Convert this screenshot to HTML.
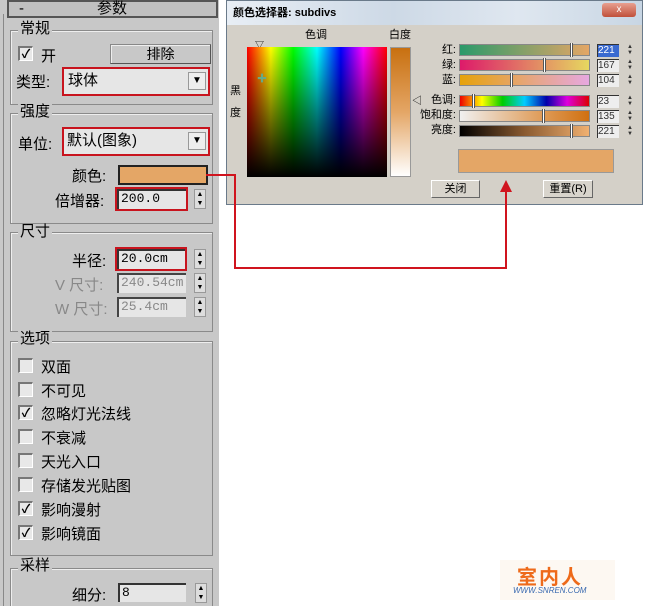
<!DOCTYPE html>
<html><head><meta charset="utf-8"><style>
*{box-sizing:border-box;margin:0;padding:0}
html,body{width:650px;height:606px;overflow:hidden}
body{background:#fff;position:relative;font-family:"Liberation Sans","Noto Sans CJK SC",sans-serif;font-size:14px;color:#000}
.a{position:absolute}
.grp{position:absolute;border:1px solid #8a8a8a;box-shadow:1px 1px 0 #eee inset}
.lbl{position:absolute;background:#c8c8c8;padding:0 2px;font-size:15px;line-height:16px}
.cb{position:absolute;width:15px;height:15px;background:#e8e8e8;border-top:2px solid #777;border-left:2px solid #777;border-right:1px solid #fff;border-bottom:1px solid #fff;font-size:12px;line-height:12px;text-align:center;font-weight:bold}
.in{position:absolute;background:#e6e6e6;border-top:2px solid #333;border-left:2px solid #333;font-family:"Liberation Mono",monospace;font-size:13px;padding-left:2px;line-height:16px}
.red{outline:2px solid #c8141e}
.sp{position:absolute;width:12px;height:20px;background:#ddd;border:1px solid #999;font-size:7px;line-height:9px;text-align:center}
.dd{position:absolute;width:18px;height:18px;background:#eee;border:1px solid #999;font-size:10px;text-align:center;line-height:16px}
.sl{position:absolute;left:459px;width:131px;height:12px;border:1px solid #888}
.nb{position:absolute;left:597px;width:22px;height:13px;background:#eee;border-top:1px solid #333;border-left:1px solid #333;font-size:10px;line-height:12px;color:#333}
.ss{position:absolute;left:627px;width:6px;height:13px;font-size:6px;line-height:6px;color:#333}
.tk{position:absolute;width:3px;height:14px;background:#fff;border-left:1px solid #555;border-right:1px solid #555;top:-2px}
</style></head><body>
<div class="a" style="left:0;top:0;width:219px;height:606px;background:#c8c8c8"></div>
<div class="a" style="left:3px;top:14px;width:1px;height:592px;background:#888"></div>
<div class="a" style="left:7px;top:0;width:211px;height:18px;background:#c0c0c0;border:2px solid #555;font-size:15px;line-height:13px"><span style="position:absolute;left:10px">-</span><span style="position:absolute;left:88px">参数</span></div>

<div class="grp" style="left:10px;top:30px;width:203px;height:75px"></div>
<div class="lbl" style="left:18px;top:21px">常规</div>
<div class="cb" style="left:18px;top:46px">✓</div><div class="a" style="left:41px;top:45px;font-size:15px">开</div>
<div class="a" style="left:110px;top:44px;width:101px;height:20px;background:#c8c8c8;border:1px solid #888;border-right-color:#555;border-bottom-color:#555;box-shadow:1px 1px 0 #eee inset;text-align:center;font-size:14px;line-height:18px">排除</div>
<div class="a" style="left:16px;top:71px;font-size:15px">类型:</div>
<div class="a red" style="left:64px;top:69px;width:144px;height:25px;background:#e6e6e6;font-size:15px;line-height:24px;padding-left:4px">球体</div>
<div class="dd" style="left:188px;top:72px">▼</div>

<div class="grp" style="left:10px;top:113px;width:203px;height:111px"></div>
<div class="lbl" style="left:18px;top:104px">强度</div>
<div class="a" style="left:18px;top:133px;font-size:15px">单位:</div>
<div class="a red" style="left:64px;top:129px;width:144px;height:25px;background:#e6e6e6;font-size:15px;line-height:24px;padding-left:3px">默认(图象)</div>
<div class="dd" style="left:188px;top:132px">▼</div>
<div class="a" style="left:72px;top:165px;font-size:15px">颜色:</div>
<div class="a" style="left:118px;top:165px;width:90px;height:20px;background:#e4a666;border:2px solid #222"></div>
<div class="a" style="left:55px;top:190px;font-size:15px">倍增器:</div>
<div class="in red" style="left:117px;top:189px;width:69px;height:20px">200.0</div>
<div class="sp" style="left:194px;top:189px">▲<br>▼</div>

<div class="grp" style="left:10px;top:232px;width:203px;height:100px"></div>
<div class="lbl" style="left:18px;top:224px">尺寸</div>
<div class="a" style="left:72px;top:250px;font-size:15px">半径:</div>
<div class="in red" style="left:117px;top:249px;width:68px;height:20px">20.0cm</div>
<div class="sp" style="left:194px;top:249px">▲<br>▼</div>
<div class="a" style="left:55px;top:274px;font-size:15px;color:#888">V 尺寸:</div>
<div class="in" style="left:117px;top:273px;width:69px;height:20px;color:#888;border-color:#444">240.54cm</div>
<div class="sp" style="left:194px;top:273px">▲<br>▼</div>
<div class="a" style="left:55px;top:298px;font-size:15px;color:#888">W 尺寸:</div>
<div class="in" style="left:117px;top:297px;width:69px;height:20px;color:#888;border-color:#444">25.4cm</div>
<div class="sp" style="left:194px;top:297px">▲<br>▼</div>

<div class="grp" style="left:10px;top:341px;width:203px;height:215px"></div>
<div class="lbl" style="left:18px;top:331px">选项</div>
<div class="cb" style="left:18px;top:358px"></div><div class="a" style="left:41px;top:356px;font-size:15px">双面</div>
<div class="cb" style="left:18px;top:382px"></div><div class="a" style="left:41px;top:380px;font-size:15px">不可见</div>
<div class="cb" style="left:18px;top:405px">✓</div><div class="a" style="left:41px;top:403px;font-size:15px">忽略灯光法线</div>
<div class="cb" style="left:18px;top:429px"></div><div class="a" style="left:41px;top:427px;font-size:15px">不衰减</div>
<div class="cb" style="left:18px;top:453px"></div><div class="a" style="left:41px;top:451px;font-size:15px">天光入口</div>
<div class="cb" style="left:18px;top:477px"></div><div class="a" style="left:41px;top:475px;font-size:15px">存储发光贴图</div>
<div class="cb" style="left:18px;top:501px">✓</div><div class="a" style="left:41px;top:499px;font-size:15px">影响漫射</div>
<div class="cb" style="left:18px;top:525px">✓</div><div class="a" style="left:41px;top:523px;font-size:15px">影响镜面</div>

<div class="grp" style="left:10px;top:568px;width:203px;height:38px;border-bottom:none"></div>
<div class="lbl" style="left:18px;top:558px">采样</div>
<div class="a" style="left:72px;top:584px;font-size:15px">细分:</div>
<div class="in" style="left:118px;top:583px;width:68px;height:19px">8</div>
<div class="sp" style="left:195px;top:583px">▲<br>▼</div>

<div class="a" style="left:226px;top:0;width:417px;height:205px;background:#d4d0c8;border:1px solid #6a7a8a"></div>
<div class="a" style="left:227px;top:1px;width:415px;height:24px;background:linear-gradient(90deg,#e8eef5,#cdd9e6 40%,#dfe7f0 70%,#c8d6e4);font-size:11px;font-weight:bold;line-height:24px;padding-left:6px">颜色选择器: subdivs</div>
<div class="a" style="left:602px;top:3px;width:34px;height:14px;background:linear-gradient(#e8a090,#c0503a);border-radius:3px;color:#fff;font-size:10px;text-align:center;line-height:14px">x</div>
<div class="a" style="left:305px;top:26px;font-size:11px">色调</div>
<div class="a" style="left:389px;top:26px;font-size:11px">白度</div>
<div class="a" style="left:255px;top:38px;font-size:9px">▽</div>
<div class="a" style="left:230px;top:80px;font-size:11px;line-height:22px">黑<br>度</div>
<div class="a" style="left:247px;top:47px;width:140px;height:130px;background:linear-gradient(to bottom,rgba(0,0,0,0),#000),linear-gradient(90deg,#f00,#ff0 17%,#0f0 33%,#0ff 50%,#00f 67%,#f0f 83%,#f00)"></div>
<div class="a" style="left:257px;top:70px;font-size:10px;color:#6a8">✚</div>
<div class="a" style="left:390px;top:47px;width:21px;height:130px;background:linear-gradient(#c87010,#e4a666 50%,#fff);border:1px solid #999"></div>
<div class="a" style="left:412px;top:92px;font-size:10px">◁</div>
<div class="a" style="left:418px;top:43px;width:38px;text-align:right;font-size:11px;line-height:15px">红:<br>绿:<br>蓝:</div>
<div class="a" style="left:412px;top:93px;width:44px;text-align:right;font-size:11px;line-height:15px">色调:<br>饱和度:<br>亮度:</div>
<div class="sl" style="top:44px;background:linear-gradient(90deg,#2a9a6a,#e4a666)"><div class="tk" style="left:110px"></div></div>
<div class="sl" style="top:59px;background:linear-gradient(90deg,#dd1a6a,#e6d860)"><div class="tk" style="left:83px"></div></div>
<div class="sl" style="top:74px;background:linear-gradient(90deg,#e6a20a,#e6a8e0)"><div class="tk" style="left:50px"></div></div>
<div class="sl" style="top:95px;background:linear-gradient(90deg,#e00,#ff0 17%,#0c0 33%,#0cf 50%,#00a 67%,#d0d 83%,#d00)"><div class="tk" style="left:12px"></div></div>
<div class="sl" style="top:110px;background:linear-gradient(90deg,#f0f0f0,#e0a060 60%,#d07010)"><div class="tk" style="left:82px"></div></div>
<div class="sl" style="top:125px;background:linear-gradient(90deg,#000,#8a5a30 50%,#f0b070)"><div class="tk" style="left:110px"></div></div>
<div class="nb" style="top:44px;background:#3a6ad0;color:#fff">221</div><div class="ss" style="top:44px">▲<br>▼</div>
<div class="nb" style="top:59px">167</div><div class="ss" style="top:59px">▲<br>▼</div>
<div class="nb" style="top:74px">104</div><div class="ss" style="top:74px">▲<br>▼</div>
<div class="nb" style="top:95px">23</div><div class="ss" style="top:95px">▲<br>▼</div>
<div class="nb" style="top:110px">135</div><div class="ss" style="top:110px">▲<br>▼</div>
<div class="nb" style="top:125px">221</div><div class="ss" style="top:125px">▲<br>▼</div>
<div class="a" style="left:458px;top:149px;width:156px;height:24px;background:#e4a666;border:1px solid #999"></div>
<div class="a" style="left:431px;top:180px;width:49px;height:18px;background:#d8d4cc;border:1px solid #fff;border-right-color:#666;border-bottom-color:#666;font-size:11px;text-align:center;line-height:16px">关闭</div>
<div class="a" style="left:543px;top:180px;width:50px;height:18px;background:#d8d4cc;border:1px solid #fff;border-right-color:#666;border-bottom-color:#666;font-size:11px;text-align:center;line-height:16px">重置(R)</div>

<svg class="a" style="left:0;top:0" width="650" height="606">
<polyline points="206,175 235,175 235,268 506,268 506,190" fill="none" stroke="#d0141e" stroke-width="2"/>
<polygon points="500,192 512,192 506,180" fill="#d0141e"/>
</svg>

<div class="a" style="left:500px;top:560px;width:115px;height:40px;background:#fdf8f2"></div>
<div class="a" style="left:517px;top:561px;font-size:20px;font-weight:bold;color:#ee6a1a;letter-spacing:2px">室内人</div>
<div class="a" style="left:513px;top:586px;font-size:8px;color:#3a6ab0;font-style:italic">WWW.SNREN.COM</div>
</body></html>
